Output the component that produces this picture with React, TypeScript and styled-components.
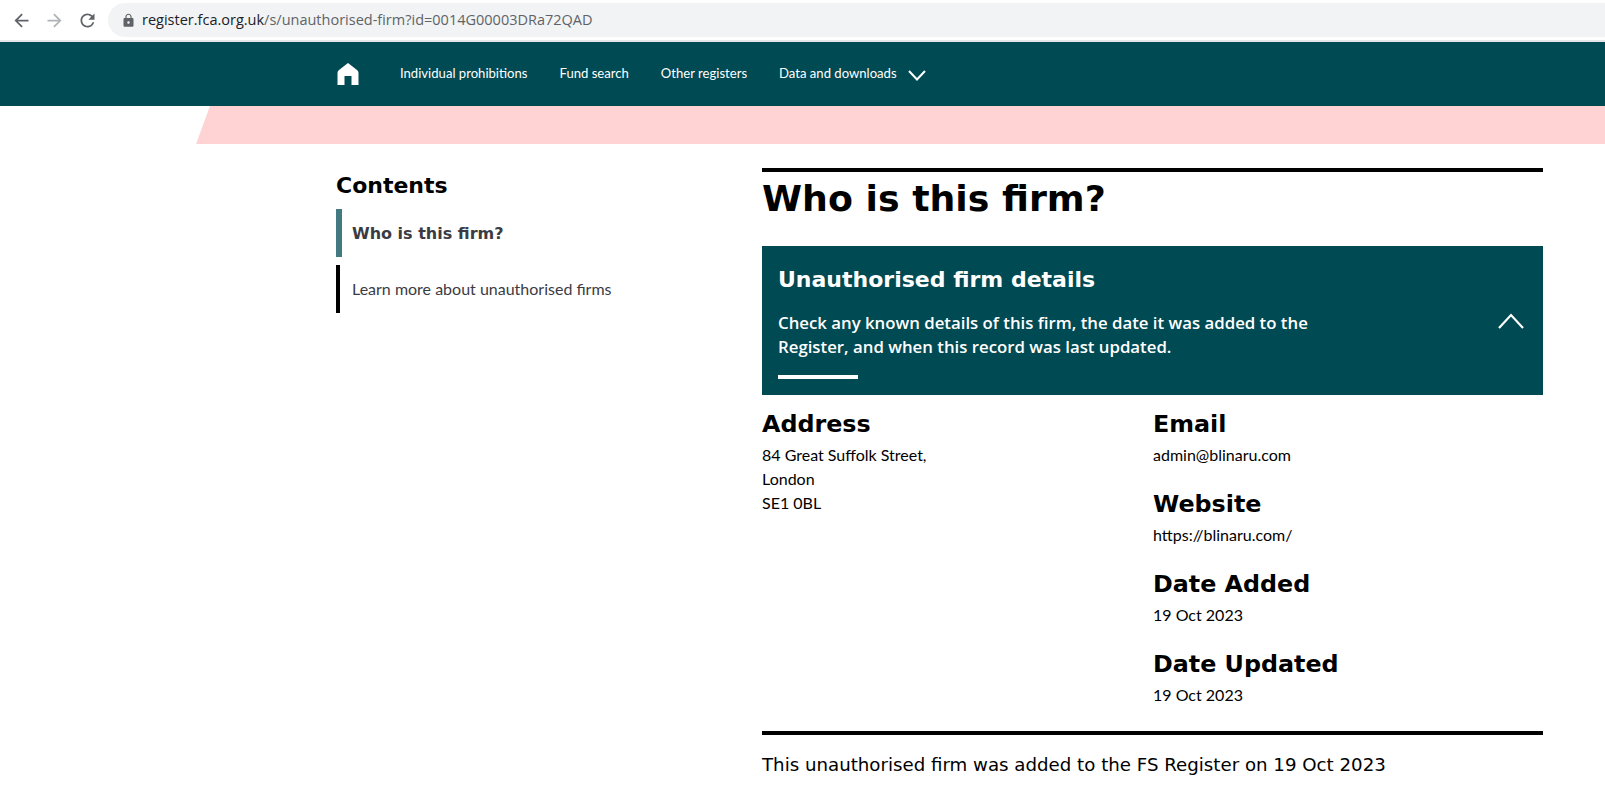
import styled, { createGlobalStyle } from "styled-components";
import { MdArrowBack, MdArrowForward, MdRefresh, MdLock } from "react-icons/md";

const GlobalStyle = createGlobalStyle`
  html, body {
    margin: 0;
    padding: 0;
    background: #fff;
    overflow: hidden;
  }
`;

const navLinks = ["Individual prohibitions", "Fund search", "Other registers"];

const firmDetails = [
  { label: "Email", value: "admin@blinaru.com" },
  { label: "Website", value: "https://blinaru.com/" },
  { label: "Date Added", value: "19 Oct 2023" },
  { label: "Date Updated", value: "19 Oct 2023" },
];

export default function App() {
  return (
    <Page>
      <GlobalStyle />
      <BrowserBar>
        <BrowserButton $muted={false}><MdArrowBack /></BrowserButton>
        <BrowserButton $muted><MdArrowForward /></BrowserButton>
        <BrowserButton $muted={false}><MdRefresh /></BrowserButton>
        <AddressBar>
          <LockIcon><MdLock /></LockIcon>
          <Url>
            <UrlHost>register.fca.org.uk</UrlHost>/s/unauthorised-firm?id=0014G00003DRa72QAD
          </Url>
        </AddressBar>
      </BrowserBar>

      <NavBar>
        <HomeLink>
          <svg width="22" height="22" viewBox="0 0 22 22" fill="#fff">
            <path d="M11 0 L20 7 Q21.5 8.2 21.5 10 V22 H14.5 V13 H7.5 V22 H0.5 V10 Q0.5 8.2 2 7 Z" />
          </svg>
        </HomeLink>
        {navLinks.map((link) => (
          <NavLink key={link}>{link}</NavLink>
        ))}
        <NavLink>
          Data and downloads
          <NavChevron width="18" height="11" viewBox="0 0 18 11">
            <path d="M1 1 L9 9.5 L17 1" fill="none" stroke="#fff" strokeWidth="2" />
          </NavChevron>
        </NavLink>
      </NavBar>

      <PinkBand />

      <Content>
        <Sidebar>
          <ContentsTitle>Contents</ContentsTitle>
          <SideItem $active>Who is this firm?</SideItem>
          <SideItem $active={false}>Learn more about unauthorised firms</SideItem>
        </Sidebar>

        <Main>
          <Title>Who is this firm?</Title>
          <Panel>
            <PanelText>
              <PanelTitle>Unauthorised firm details</PanelTitle>
              <PanelDescription>
                Check any known details of this firm, the date it was added to the Register, and
                when this record was last updated.
              </PanelDescription>
              <PanelRule />
            </PanelText>
            <svg width="26" height="16" viewBox="0 0 26 16">
              <path d="M1 15 L13 2 L25 15" fill="none" stroke="#fff" strokeWidth="2.2" />
            </svg>
          </Panel>

          <Details>
            <DetailColumn>
              <DetailHeading>Address</DetailHeading>
              <DetailValue>84 Great Suffolk Street,</DetailValue>
              <DetailValue>London</DetailValue>
              <DetailValue>SE1 0BL</DetailValue>
            </DetailColumn>
            <DetailColumn>
              {firmDetails.map((item) => (
                <DetailBlock key={item.label}>
                  <DetailHeading>{item.label}</DetailHeading>
                  <DetailValue>{item.value}</DetailValue>
                </DetailBlock>
              ))}
            </DetailColumn>
          </Details>

          <FootNote>This unauthorised firm was added to the FS Register on 19 Oct 2023</FootNote>
        </Main>
      </Content>
    </Page>
  );
}

const Page = styled.div`
  width: 1605px;
  height: 788px;
  overflow: hidden;
  font-family: "Lato", sans-serif;
  color: #000;
`;

const BrowserBar = styled.div`
  height: 40px;
  display: flex;
  align-items: center;
  padding: 0 0 0 8px;
  background: #fff;
  border-bottom: 2px solid #e4e6e8;
`;

const BrowserButton = styled.div<{ $muted: boolean }>`
  width: 26px;
  margin-right: 7px;
  height: 26px;
  display: flex;
  align-items: center;
  justify-content: center;
  font-size: 21px;
  color: ${({ $muted }) => ($muted ? "#b0b3b7" : "#5f6368")};
`;

const AddressBar = styled.div`
  flex: 1;
  height: 34px;
  margin-left: 1px;
  display: flex;
  align-items: center;
  padding-left: 13px;
  background: #f1f3f4;
  border-radius: 17px 0 0 17px;
`;

const LockIcon = styled.div`
  display: flex;
  font-size: 15px;
  color: #5f6368;
  margin-right: 6px;
`;

const Url = styled.div`
  padding-bottom: 2px;
  font-family: "Open Sans", sans-serif;
  font-size: 14.5px;
  color: #5f6368;
`;

const UrlHost = styled.span`
  color: #202124;
`;

const NavBar = styled.nav`
  height: 64px;
  display: flex;
  align-items: center;
  padding-left: 337px;
  background: #004a53;
`;

const HomeLink = styled.div`
  display: flex;
  margin-right: 9px;
`;

const NavLink = styled.div`
  display: flex;
  align-items: center;
  margin-left: 32px;
  padding-bottom: 2px;
  font-size: 13.1px;
  color: #fff;
`;

const NavChevron = styled.svg`
  margin-left: 11px;
  margin-top: 4px;
`;

const PinkBand = styled.div`
  height: 38px;
  margin-left: 196px;
  background: #ffd3d3;
  clip-path: polygon(14px 0, 100% 0, 100% 100%, 0 100%);
`;

const Content = styled.div`
  display: flex;
  padding: 24px 0 0 336px;
`;

const Sidebar = styled.aside`
  width: 426px;
`;

const ContentsTitle = styled.h2`
  margin: 3px 0 8px;
  font-family: "DejaVu Sans", sans-serif;
  font-size: 22px;
  line-height: 30px;
  font-weight: 700;
`;

const SideItem = styled.div<{ $active: boolean }>`
  height: 48px;
  margin-bottom: 8px;
  display: flex;
  align-items: center;
  box-sizing: border-box;
  border-left: ${({ $active }) => ($active ? "6px solid #437a82" : "4px solid #000")};
  padding-left: ${({ $active }) => ($active ? "10px" : "12px")};
  padding-bottom: ${({ $active }) => ($active ? "0" : "2px")};
  font-family: ${({ $active }) => ($active ? '"DejaVu Sans"' : '"Lato"')}, sans-serif;
  font-size: 16px;
  font-weight: ${({ $active }) => ($active ? 700 : 400)};
  color: #3b3b44;
`;

const Main = styled.main`
  width: 781px;
  border-top: 4px solid #000;
`;

const Title = styled.h1`
  margin: 4px 0 24px;
  font-family: "DejaVu Sans", sans-serif;
  font-size: 36.3px;
  line-height: 46px;
  font-weight: 700;
`;

const Panel = styled.section`
  height: 149px;
  box-sizing: border-box;
  display: flex;
  align-items: center;
  justify-content: space-between;
  padding: 0 19px 0 16px;
  background: #004a53;
  color: #fff;
`;

const PanelText = styled.div`
  width: 540px;
  padding-top: 2px;
`;

const PanelTitle = styled.h3`
  margin: 0 0 16px;
  font-family: "DejaVu Sans", sans-serif;
  font-size: 22px;
  line-height: 30px;
  font-weight: 700;
`;

const PanelDescription = styled.p`
  margin: 0 0 16px;
  font-family: "Open Sans", sans-serif;
  font-size: 16.8px;
  line-height: 24px;
  font-weight: 600;
`;

const PanelRule = styled.div`
  width: 80px;
  height: 4px;
  background: #fff;
`;

const Details = styled.div`
  display: flex;
  padding: 12px 0 24px;
  border-bottom: 4px solid #000;
`;

const DetailColumn = styled.div`
  width: 391px;

  & + & {
    margin-left: 1px;
  }
`;

const DetailBlock = styled.div`
  margin-bottom: 20px;

  &:last-child {
    margin-bottom: 0;
  }
`;

const DetailHeading = styled.h4`
  margin: 0 0 4px;
  padding-top: 2px;
  font-family: "DejaVu Sans", sans-serif;
  font-size: 23.8px;
  line-height: 30px;
  font-weight: 700;
`;

const DetailValue = styled.div`
  font-size: 16px;
  line-height: 24px;
`;

const FootNote = styled.p`
  margin: 18px 0 0;
  font-family: "DejaVu Sans", sans-serif;
  font-size: 18.2px;
  line-height: 24px;
`;
